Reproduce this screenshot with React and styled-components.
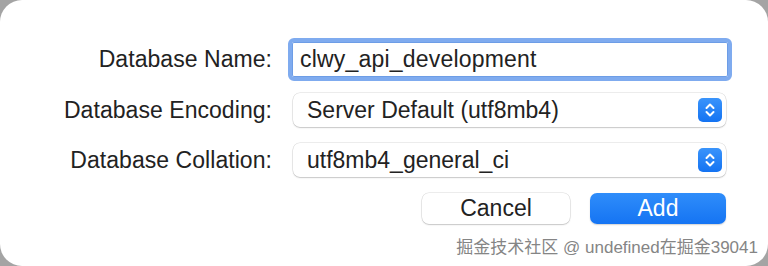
import React from 'react'
import styled, { createGlobalStyle } from 'styled-components'

const GlobalStyle = createGlobalStyle`
  html, body {
    margin: 0;
    padding: 0;
    background: #a4a4a4;
  }
  body {
    font-family: "Liberation Sans", Arial, sans-serif;
    -webkit-font-smoothing: antialiased;
  }
`

const Dialog = styled.div`
  position: relative;
  width: 768px;
  height: 266px;
  box-sizing: border-box;
  background: #ffffff;
  border-radius: 22px;
  padding-top: 38px;
  display: flex;
  flex-direction: column;
  color: #222222;
`

const Row = styled.div`
  display: grid;
  grid-template-columns: 272px 444px;
  column-gap: 16px;
  align-items: center;
  height: ${ props => props.$height }px;
  margin-top: ${ props => props.$top || 0 }px;
`

const Label = styled.label`
  font-size: 23px;
  letter-spacing: 0.05px;
  text-align: right;
  white-space: nowrap;
`

const NameInput = styled.div`
  height: 43px;
  box-sizing: border-box;
  border: 4px solid #7fabef;
  border-radius: 6px;
  padding: 0 0 0 8px;
  display: flex;
  align-items: center;
  font-size: 23px;
  letter-spacing: 0.2px;
  background: #fff;
  box-shadow: inset 0 0 0 1px #6d9de6;
`

const Select = styled.div`
  margin: 0 6px 0 5px;
  height: 34px;
  box-sizing: border-box;
  border-radius: 7px;
  background: #fff;
  box-shadow: 0 0 0 0.5px rgba(0, 0, 0, 0.14), 0 1px 1.5px rgba(0, 0, 0, 0.16);
  display: flex;
  align-items: center;
  justify-content: space-between;
  padding: 0 4px 0 14px;
  font-size: 23px;
`

const Stepper = styled.span`
  width: 24px;
  height: 24px;
  border-radius: 5px;
  background: linear-gradient(#3a94fb, #1473f2);
  display: flex;
  align-items: center;
  justify-content: center;
`

const Buttons = styled.div`
  display: flex;
  justify-content: flex-end;
  gap: 20px;
  padding-right: 42px;
  margin-top: 16px;
`

const Button = styled.div`
  width: ${ props => props.$width }px;
  height: 31px;
  border-radius: 7px;
  display: flex;
  align-items: center;
  justify-content: center;
  font-size: 23px;
  background: ${ props => props.$primary ? 'linear-gradient(#2f8dfa, #1574f3)' : '#fff' };
  color: ${ props => props.$primary ? '#fff' : '#222' };
  box-shadow: ${ props => props.$primary
    ? '0 1px 1.5px rgba(0, 0, 0, 0.18)'
    : '0 0 0 0.5px rgba(0, 0, 0, 0.14), 0 1px 1.5px rgba(0, 0, 0, 0.16)' };
`

const Watermark = styled.div`
  position: absolute;
  right: 10px;
  bottom: 8px;
  font-family: "Liberation Sans", "Noto Sans CJK SC", sans-serif;
  font-size: 17px;
  color: #858585;
  text-shadow: 0 0 2px #fff;
  white-space: nowrap;
`

function StepperIcon() {
  return (
    <Stepper>
      <svg width="12" height="16" viewBox="0 0 12 16" fill="none">
        <path d="M2.5 6 L6 2.5 L9.5 6" stroke="#fff" strokeWidth="2" strokeLinecap="round" strokeLinejoin="round" />
        <path d="M2.5 10 L6 13.5 L9.5 10" stroke="#fff" strokeWidth="2" strokeLinecap="round" strokeLinejoin="round" />
      </svg>
    </Stepper>
  )
}

export default function App() {
  return (
    <>
      <GlobalStyle />
      <Dialog>
        <Row $height={ 43 }>
          <Label>Database Name:</Label>
          <NameInput>clwy_api_development</NameInput>
        </Row>
        <Row $height={ 34 } $top={ 12 }>
          <Label>Database Encoding:</Label>
          <Select>
            <span>Server Default (utf8mb4)</span>
            <StepperIcon />
          </Select>
        </Row>
        <Row $height={ 34 } $top={ 16 }>
          <Label>Database Collation:</Label>
          <Select>
            <span>utf8mb4_general_ci</span>
            <StepperIcon />
          </Select>
        </Row>
        <Buttons>
          <Button $width={ 148 }>Cancel</Button>
          <Button $width={ 136 } $primary>Add</Button>
        </Buttons>
        <Watermark>掘金技术社区 @ undefined在掘金39041</Watermark>
      </Dialog>
    </>
  )
}
